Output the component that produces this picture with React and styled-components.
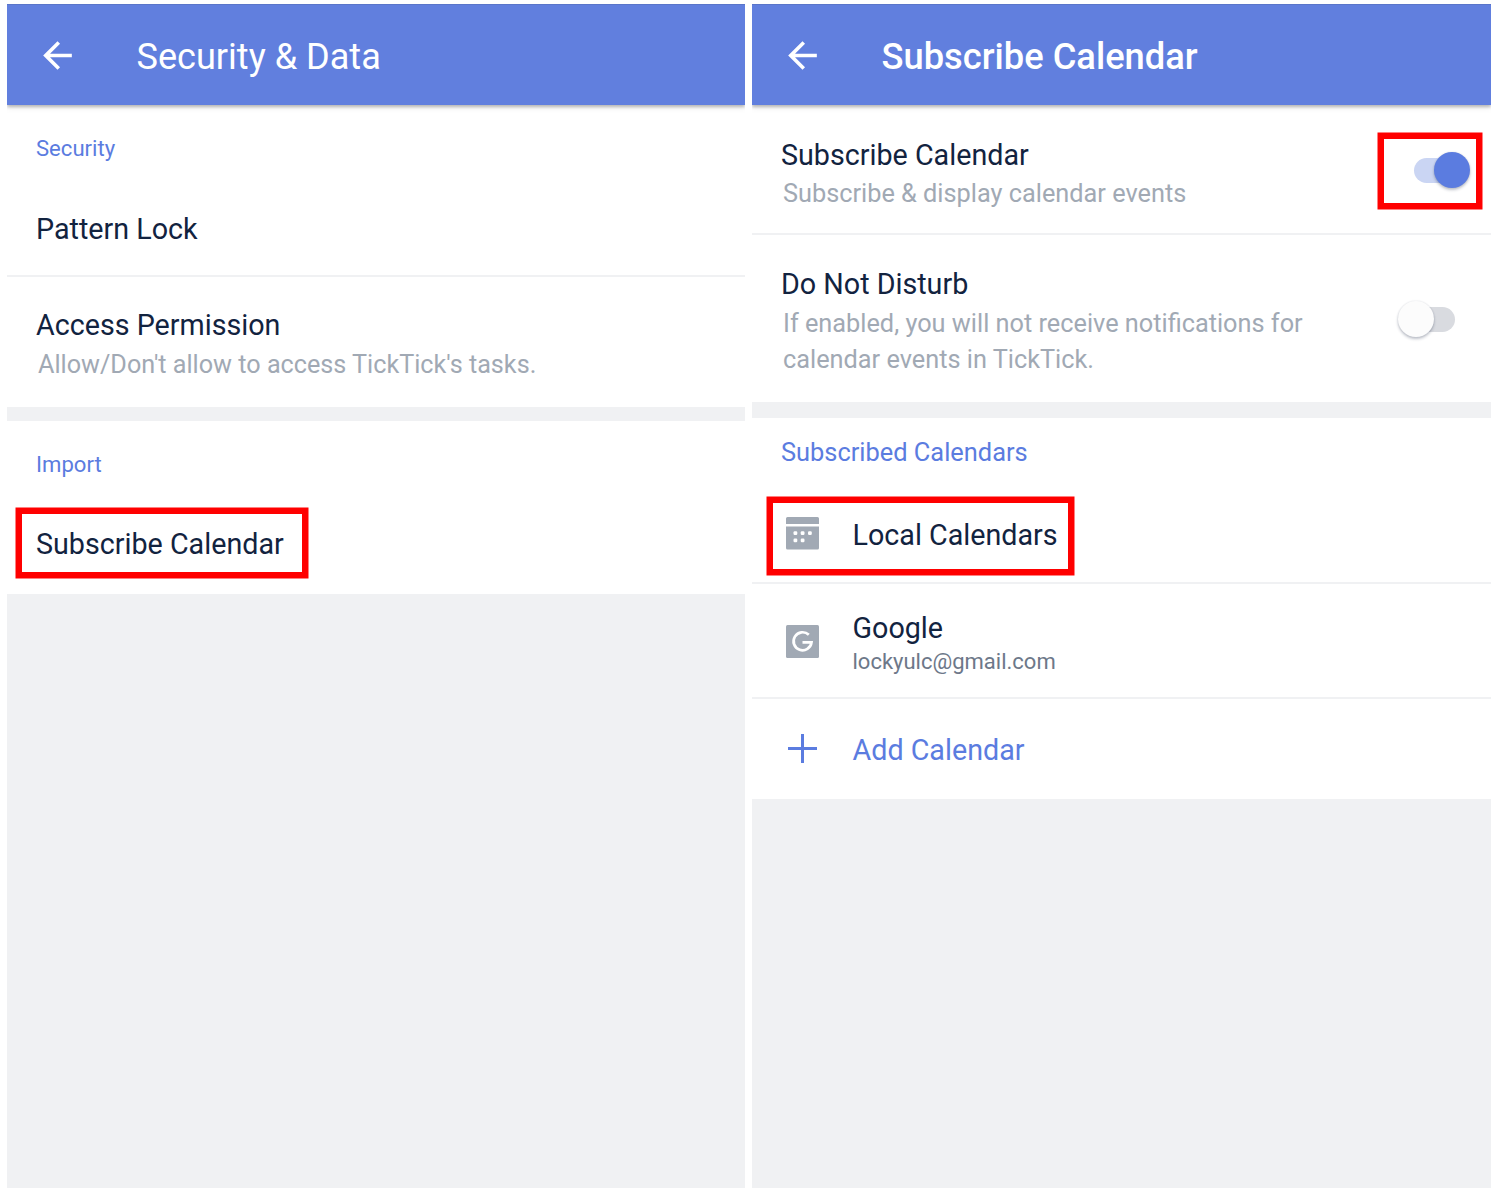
import React from "react";
import styled, { createGlobalStyle } from "styled-components";

const color = {
  bar: "#617fde",
  accent: "#5b7ce0",
  ink: "#12233f",
  muted: "#a1a9b4",
  secondary: "#6d7889",
  surface: "#f0f1f3",
  mark: "#ff0000",
};

const GlobalStyle = createGlobalStyle`
  *, *::before, *::after { box-sizing: border-box; }
  body {
    margin: 0;
    background: #fff;
    font-family: Roboto, "Liberation Sans", sans-serif;
  }
`;

const Page = styled.main`
  display: grid;
  grid-template-columns: 738px 739px;
  column-gap: 7px;
  width: 1500px;
  height: 1192px;
  padding: 4px 9px 4px 7px;
`;

const Screen = styled.section`
  display: flex;
  flex-direction: column;
  height: 1184px;
  overflow: hidden;
  background: ${color.surface};
`;

const AppBar = styled.header`
  position: relative;
  z-index: 1;
  display: flex;
  align-items: center;
  flex: none;
  height: 101px;
  padding-left: 28.5px;
  background: ${color.bar};
  border-top: 1px solid #5a75c9;
  color: #fff;
  box-shadow: 0 2px 3px rgba(0, 0, 0, 0.26), 0 4px 6px rgba(0, 0, 0, 0.05);

  svg {
    width: 43px;
    height: 43px;
  }
`;

const BarTitle = styled.h1`
  margin: 3px 0 0 58px;
  font-size: ${(p) => (p.$strong ? 36.3 : 36.1)}px;
  font-weight: ${(p) => (p.$strong ? 500 : 400)};
  line-height: 44px;
  white-space: nowrap;
`;

const Group = styled.div`
  background: #fff;
  margin-bottom: ${(p) => p.$gap || 0}px;
`;

const GroupLabel = styled.h2`
  margin: 0;
  height: ${(p) => p.$height}px;
  padding: ${(p) => p.$top}px 0 0 29px;
  font-size: ${(p) => p.$size || 22.1}px;
  font-weight: 400;
  line-height: 24px;
  color: ${color.accent};
`;

const Row = styled.div`
  display: flex;
  align-items: ${(p) => (p.$top ? "flex-start" : "center")};
  height: ${(p) => p.$height}px;
  padding: ${(p) => p.$top || 0}px 0 0 29px;
  border-bottom: ${(p) => (p.$divided ? "2px solid #f0f1f3" : "none")};
`;

const Body = styled.div`
  flex: 1;
  min-width: 0;
  padding-top: ${(p) => p.$drop || 0}px;
`;

const Title = styled.div`
  padding-top: ${(p) => p.$drop || 0}px;
  font-size: 28.7px;
  line-height: ${(p) => (p.$compact ? 36 : 42)}px;
  color: ${(p) => (p.$action ? color.accent : color.ink)};
  white-space: nowrap;
`;

const Note = styled.p`
  margin: ${(p) => p.$drop || 0}px 0 0 2px;
  max-width: 540px;
  font-size: ${(p) => p.$size || 25.3}px;
  line-height: 36px;
  color: ${color.muted};
`;

const Email = styled.div`
  font-size: 22px;
  line-height: 31px;
  color: ${color.secondary};
`;

const IconSlot = styled.span`
  display: flex;
  justify-content: center;
  flex: none;
  width: 43px;
  margin-right: 28.5px;
  padding: ${(p) => p.$drop || 0}px 0 ${(p) => p.$lift || 0}px;
  color: ${(p) => (p.$action ? color.accent : color.muted)};
`;

const Marked = styled.div`
  position: relative;

  &::after {
    content: "";
    position: absolute;
    top: ${(p) => p.$top}px;
    left: ${(p) => p.$left}px;
    width: ${(p) => p.$width}px;
    height: ${(p) => p.$height}px;
    border: 6px solid ${color.mark};
    box-shadow: 0 0 0 0.5px ${color.mark};
    pointer-events: none;
  }
`;

const Track = styled.span`
  position: relative;
  flex: none;
  width: 52px;
  height: 25px;
  margin: ${(p) => p.$top}px ${(p) => p.$right}px 0 0;
  border-radius: 13px;
  background: ${(p) => (p.$on ? "#cad5f3" : "#d9dbe0")};
`;

const Thumb = styled.span`
  position: absolute;
  top: -6px;
  left: ${(p) => (p.$on ? "20px" : "-5px")};
  width: 36px;
  height: 36px;
  border-radius: 50%;
  background: ${(p) => (p.$on ? color.accent : "#fcfcfc")};
  box-shadow: 0 2px 3px rgba(30, 40, 70, 0.28), 0 0 2px rgba(30, 40, 70, 0.12);
`;

const BackIcon = () => (
  <svg viewBox="0 0 24 24" fill="currentColor">
    <path d="M20 11H7.83l5.59-5.59L12 4l-8 8 8 8 1.41-1.41L7.83 13H20v-2z" />
  </svg>
);

const CalendarIcon = () => (
  <svg width="33" height="33" viewBox="0 0 33 33">
    <path
      fill="currentColor"
      d="M1.5 0h30A1.5 1.5 0 0 1 33 1.5V7H0V1.5A1.5 1.5 0 0 1 1.5 0zM0 9.5h33V31a1.5 1.5 0 0 1-1.5 1.500h-30A1.5 1.5 0 0 1 0 31z"
    />
    <g fill="#fff">
      <rect x="7.5" y="14.2" width="3.8" height="3.8" rx="1.2" />
      <rect x="14.7" y="14.2" width="3.8" height="3.8" rx="1.2" />
      <rect x="22" y="14.2" width="3.8" height="3.8" rx="1.2" />
      <rect x="7.5" y="21.5" width="3.8" height="3.8" rx="1.2" />
      <rect x="14.7" y="21.5" width="3.8" height="3.8" rx="1.2" />
    </g>
  </svg>
);

const GoogleIcon = () => (
  <svg width="33" height="33" viewBox="0 0 33 33">
    <rect width="33" height="33" rx="1.5" fill="currentColor" />
    <path
      d="M22.8 9.8A9 9 0 1 0 25.5 17.3H16.5"
      fill="none"
      stroke="#fff"
      strokeWidth="2.7"
    />
  </svg>
);

const PlusIcon = () => (
  <svg width="29" height="29" viewBox="0 0 29 29">
    <path d="M14.5 0v29M0 14.5h29" stroke="currentColor" strokeWidth="3" />
  </svg>
);

const Switch = ({ on, top, right }) => (
  <Track $on={on} $top={top} $right={right} role="switch" aria-checked={on}>
    <Thumb $on={on} />
  </Track>
);

const TopBar = ({ title, strong }) => (
  <AppBar>
    <BackIcon />
    <BarTitle $strong={strong}>{title}</BarTitle>
  </AppBar>
);

export default function App() {
  return (
    <>
      <GlobalStyle />
      <Page>
        <Screen>
          <TopBar title="Security & Data" />
          <Group $gap={14}>
            <GroupLabel $height={76} $top={31}>Security</GroupLabel>
            <Row $height={96} $divided>
              <Title $drop={1}>Pattern Lock</Title>
            </Row>
            <Row $height={130} $top={27}>
              <Body>
                <Title>Access Permission</Title>
                <Note $size={25.2} $drop={1}>Allow/Don't allow to access TickTick's tasks.</Note>
              </Body>
            </Row>
          </Group>
          <Group>
            <GroupLabel $height={73} $top={31}>Import</GroupLabel>
            <Marked $top={14} $left={9} $width={292} $height={70}>
              <Row $height={100}>
                <Title>Subscribe Calendar</Title>
              </Row>
            </Marked>
          </Group>
        </Screen>

        <Screen>
          <TopBar title="Subscribe Calendar" strong />
          <Group $gap={16}>
            <Marked $top={28} $left={626} $width={104} $height={76}>
              <Row $height={130} $top={28.5} $divided>
                <Body>
                  <Title>Subscribe Calendar</Title>
                  <Note>Subscribe &amp; display calendar events</Note>
                </Body>
                <Switch on top={24} right={25.5} />
              </Row>
            </Marked>
            <Row $height={167} $top={28}>
              <Body>
                <Title>Do Not Disturb</Title>
                <Note $size={25.3} $drop={1}>
                  If enabled, you will not receive notifications for calendar events in TickTick.
                </Note>
              </Body>
              <Switch on={false} top={43.5} right={36} />
            </Row>
          </Group>
          <Group>
            <GroupLabel $height={70} $top={22} $size={25.4}>Subscribed Calendars</GroupLabel>
            <Marked $top={9} $left={15} $width={307} $height={78}>
              <Row $height={96} $divided>
                <IconSlot $lift={3}><CalendarIcon /></IconSlot>
                <Title>Local Calendars</Title>
              </Row>
            </Marked>
            <Row $height={115} $divided>
              <IconSlot $drop={2}><GoogleIcon /></IconSlot>
              <Body $drop={6}>
                <Title $compact>Google</Title>
                <Email>lockyulc@gmail.com</Email>
              </Body>
            </Row>
            <Row $height={100}>
              <IconSlot $action $lift={1}><PlusIcon /></IconSlot>
              <Title $action $drop={2}>Add Calendar</Title>
            </Row>
          </Group>
        </Screen>
      </Page>
    </>
  );
}
